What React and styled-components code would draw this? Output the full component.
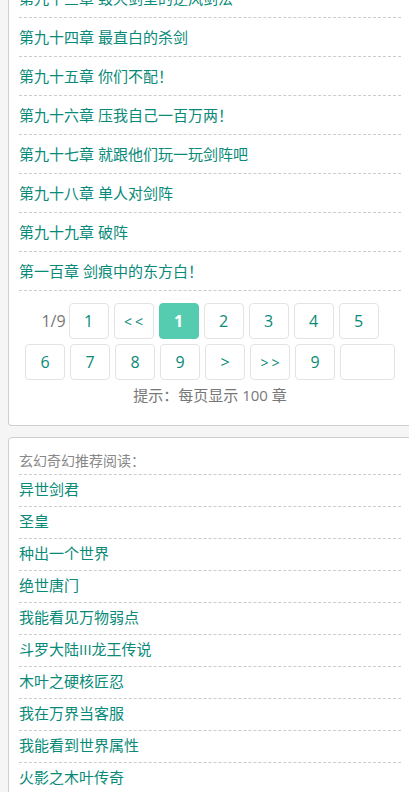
import React from 'react';
import styled, { createGlobalStyle } from 'styled-components';

const chapters = [
  '第九十三章 毁天剑室的逆风剑法',
  '第九十四章 最直白的杀剑',
  '第九十五章 你们不配！',
  '第九十六章 压我自己一百万两！',
  '第九十七章 就跟他们玩一玩剑阵吧',
  '第九十八章 单人对剑阵',
  '第九十九章 破阵',
  '第一百章 剑痕中的东方白！',
];

const pagesTop = ['1', '<<', '1', '2', '3', '4', '5'];
const pagesBottom = ['6', '7', '8', '9', '>', '>>', '9'];

const books = [
  '异世剑君',
  '圣皇',
  '种出一个世界',
  '绝世唐门',
  '我能看见万物弱点',
  '斗罗大陆III龙王传说',
  '木叶之硬核匠忍',
  '我在万界当客服',
  '我能看到世界属性',
  '火影之木叶传奇',
];

export default function App() {
  return (
    <>
      <GlobalStyle />
      <Page>
        <Panel>
          <ChapterList>
            {chapters.map((c, i) => (
              <ChapterItem key={i}>
                <a href="#">{c}</a>
              </ChapterItem>
            ))}
          </ChapterList>
          <Pager>
            <PageInfo>1/9</PageInfo>
            {pagesTop.map((p, i) => (
              <PageBtn key={'t' + i} active={i === 2} arrow={p.length > 1 && isNaN(p)}>
                {p}
              </PageBtn>
            ))}
            {pagesBottom.map((p, i) => (
              <PageBtn key={'b' + i} arrow={p.length > 1 && isNaN(p)}>
                {p}
              </PageBtn>
            ))}
            <JumpInput type="text" aria-label="page" />
          </Pager>
          <Hint>提示：每页显示 100 章</Hint>
        </Panel>
        <Panel second>
          <BookHeader>玄幻奇幻推荐阅读：</BookHeader>
          {books.map((b, i) => (
            <BookItem key={i}>
              <a href="#">{b}</a>
            </BookItem>
          ))}
        </Panel>
      </Page>
    </>
  );
}

const GlobalStyle = createGlobalStyle`
  html, body {
    margin: 0;
    padding: 0;
    background: #f5f5f5;
    overflow: hidden;
  }
  body {
    font-family: "Open Sans", "Noto Sans CJK SC", sans-serif;
  }
  a {
    text-decoration: none;
  }
`;

const Page = styled.main`
  width: 404px;
  margin: -21px 0 0 8px;
`;

const Panel = styled.section`
  background: #fff;
  border: 1px solid #cfcfcf;
  border-radius: 4px;
  padding: ${(p) => (p.second ? '10px 10px 0' : '0 10px 19px')};
  margin-top: ${(p) => (p.second ? '11px' : '0')};
  ${(p) => (p.second ? '' : 'border-top: none; border-top-left-radius: 0; border-top-right-radius: 0;')}
`;

const ChapterList = styled.ul`
  list-style: none;
  margin: 0;
  padding: 0;
`;

const ChapterItem = styled.li`
  height: 38px;
  line-height: 38px;
  border-bottom: 1px dashed #cccccc;
  font-size: 15px;

  a {
    color: #088a78;
  }
`;

const Pager = styled.div`
  display: flex;
  flex-wrap: wrap;
  justify-content: center;
  align-items: center;
  gap: 5px;
  padding: 0 5px;
  margin-top: 12px;
`;

const PageInfo = styled.span`
  font-size: 16px;
  color: #777;
  margin-right: -2px;
`;

const PageBtn = styled.a`
  box-sizing: border-box;
  width: 40px;
  height: 36px;
  display: flex;
  align-items: center;
  justify-content: center;
  border: 1px solid #e3e3e3;
  border-radius: 4px;
  font-size: ${(p) => (p.arrow ? '14px' : '16px')};
  letter-spacing: ${(p) => (p.arrow ? '3px' : '0')};
  text-indent: ${(p) => (p.arrow ? '3px' : '0')};
  background: ${(p) => (p.active ? '#55cbb0' : '#fff')};
  border-color: ${(p) => (p.active ? '#55cbb0' : '#e3e3e3')};
  color: ${(p) => (p.active ? '#fff' : '#088a78')};
  font-weight: ${(p) => (p.active ? 700 : 400)};
`;

const JumpInput = styled.input`
  box-sizing: border-box;
  width: 55px;
  height: 36px;
  margin: 0;
  padding: 0;
  border: 1px solid #e3e3e3;
  border-radius: 4px;
  background: #fff;
  outline: none;
`;

const Hint = styled.p`
  margin: 4px 0 0;
  text-align: center;
  font-size: 15px;
  line-height: 22px;
  color: #777;
`;

const BookHeader = styled.div`
  height: 26px;
  line-height: 26px;
  font-size: 14px;
  color: #888;
  border-bottom: 1px dashed #cccccc;
`;

const BookItem = styled.div`
  height: 31px;
  line-height: 29px;
  font-size: 15px;
  border-bottom: 1px dashed #cccccc;

  a {
    color: #088a78;
  }
`;
